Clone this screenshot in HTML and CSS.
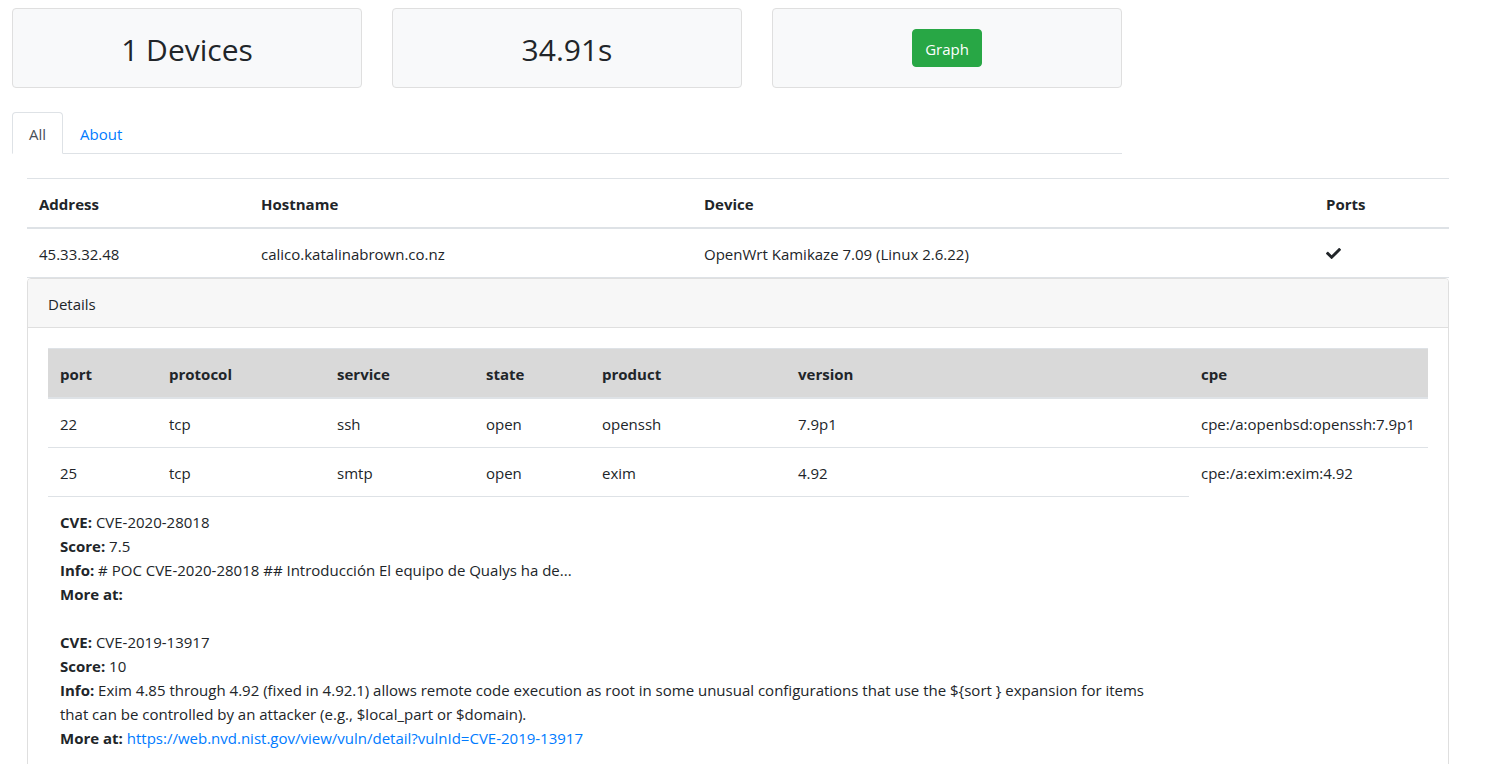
FILE: index.html
```html
<!DOCTYPE html>
<html lang="en">
<head>
<meta charset="utf-8">
<title>Scan results</title>
<link rel="stylesheet" href="styles.css">
</head>
<body>
<div class="page">
  <div class="stats">
    <div class="stat-card"><h2 class="stat-value">1 Devices</h2></div>
    <div class="stat-card"><h2 class="stat-value">34.91s</h2></div>
    <div class="stat-card"><button class="btn-graph" type="button">Graph</button></div>
  </div>

  <ul class="tabs">
    <li><a class="tab active" href="#all">All</a></li>
    <li><a class="tab" href="#about">About</a></li>
  </ul>

  <div class="results">
    <table class="hosts">
      <colgroup>
        <col class="c-address">
        <col class="c-hostname">
        <col class="c-device">
        <col class="c-ports">
      </colgroup>
      <thead>
        <tr><th>Address</th><th>Hostname</th><th>Device</th><th>Ports</th></tr>
      </thead>
      <tbody>
        <tr>
          <td>45.33.32.48</td>
          <td>calico.katalinabrown.co.nz</td>
          <td>OpenWrt Kamikaze 7.09 (Linux 2.6.22)</td>
          <td><svg class="check" width="15" height="11" viewBox="0 72 512 368" aria-hidden="true"><path fill="#212529" d="M173.898 439.404l-166.4-166.4c-9.997-9.997-9.997-26.206 0-36.204l36.203-36.204c9.997-9.998 26.207-9.998 36.204 0L192 312.69 432.095 72.596c9.997-9.997 26.206-9.997 36.204 0l36.203 36.204c9.997 9.997 9.997 26.206 0 36.204l-294.4 294.401c-9.998 9.997-26.207 9.997-36.204-.001z"/></svg></td>
        </tr>
        <tr class="details-row">
          <td colspan="4">
            <div class="card">
              <div class="card-header">Details</div>
              <div class="card-body">
                <table class="ports">
                  <colgroup>
                    <col class="p-port">
                    <col class="p-protocol">
                    <col class="p-service">
                    <col class="p-state">
                    <col class="p-product">
                    <col class="p-version">
                    <col class="p-cpe">
                  </colgroup>
                  <thead>
                    <tr><th>port</th><th>protocol</th><th>service</th><th>state</th><th>product</th><th>version</th><th>cpe</th></tr>
                  </thead>
                  <tbody>
                    <tr><td>22</td><td>tcp</td><td>ssh</td><td>open</td><td>openssh</td><td>7.9p1</td><td>cpe:/a:openbsd:openssh:7.9p1</td></tr>
                    <tr><td>25</td><td>tcp</td><td>smtp</td><td>open</td><td>exim</td><td>4.92</td><td>cpe:/a:exim:exim:4.92</td></tr>
                    <tr class="cve-row">
                      <td colspan="6">
                        <div class="cve">
                          <div><b>CVE:</b> CVE-2020-28018</div>
                          <div><b>Score:</b> 7.5</div>
                          <div><b>Info:</b> # POC CVE-2020-28018 ## Introducción El equipo de Qualys ha de...</div>
                          <div><b>More at:</b></div>
                        </div>
                        <div class="cve">
                          <div><b>CVE:</b> CVE-2019-13917</div>
                          <div><b>Score:</b> 10</div>
                          <div><b>Info:</b> Exim 4.85 through 4.92 (fixed in 4.92.1) allows remote code execution as root in some unusual configurations that use the ${sort } expansion for items that can be controlled by an attacker (e.g., $local_part or $domain).</div>
                          <div><b>More at:</b> <a href="https://web.nvd.nist.gov/view/vuln/detail?vulnId=CVE-2019-13917">https://web.nvd.nist.gov/view/vuln/detail?vulnId=CVE-2019-13917</a></div>
                        </div>
                      </td>
                    </tr>
                  </tbody>
                </table>
              </div>
            </div>
          </td>
        </tr>
      </tbody>
    </table>
  </div>
</div>
</body>
</html>
```

FILE: styles.css
```css
* { box-sizing: border-box; }

html, body {
  margin: 0;
  padding: 0;
  background: #fff;
}

body {
  font-family: "Open Sans", "Noto Sans", "Liberation Sans", sans-serif;
  font-size: 15px;
  line-height: 24px;
  color: #212529;
}

a { color: #007bff; text-decoration: none; }

.page {
  padding: 8px 0 0 12px;
}

/* stat cards */
.stats {
  display: flex;
  gap: 30px;
}

.stat-card {
  width: 350px;
  height: 80px;
  background: #f8f9fa;
  border: 1px solid #dfdfdf;
  border-radius: 4px;
  padding: 20px;
  display: flex;
  align-items: center;
  justify-content: center;
}

.stat-value {
  margin: 0;
  padding-top: 3px;
  font-size: 30px;
  font-weight: 400;
  line-height: 38px;
  color: #212529;
}

.btn-graph {
  font-family: inherit;
  font-size: 15px;
  line-height: 24px;
  color: #fff;
  background: #28a745;
  border: 1px solid #28a745;
  border-radius: 4px;
  padding: 7px 12px 5px;
  width: 70px;
  height: 38px;
}

/* tabs */
.tabs {
  list-style: none;
  margin: 24px 0 0 0;
  padding: 0;
  width: 1110px;
  display: flex;
  border-bottom: 1px solid #dee2e6;
}

.tabs li { margin-bottom: -1px; }

.tab {
  display: block;
  padding: 9px 16px 7px;
  border: 1px solid transparent;
  border-radius: 4px 4px 0 0;
  color: #007bff;
}

.tab.active {
  color: #495057;
  background: #fff;
  border-color: #dee2e6 #dee2e6 #fff;
}

/* hosts table */
.results {
  margin: 24px 0 0 15px;
  width: 1422px;
}

table {
  border-collapse: collapse;
  table-layout: fixed;
  width: 100%;
}

th, td {
  text-align: left;
  vertical-align: top;
  padding: 13px 12px 11px;
  border-top: 1px solid #dee2e6;
}

th { font-weight: 700; }

thead th {
  border-bottom: 2px solid #dee2e6;
}

.c-address { width: 222px; }
.c-hostname { width: 443px; }
.c-device { width: 622px; }
.c-ports { width: 135px; }

.check {
  display: block;
  margin-top: 6px;
}

.details-row > td {
  padding: 0;
}

.card {
  border: 1px solid #dfdfdf;
  border-radius: 4px;
  background: #fff;
}

.card-header {
  padding: 13px 20px 11px;
  background: #f7f7f7;
  border-bottom: 1px solid #dfdfdf;
  border-radius: 3px 3px 0 0;
}

.card-body {
  padding: 20px;
}

/* ports table */
.ports thead th {
  background: #d9d9d9;
}

.p-port { width: 109px; }
.p-protocol { width: 168px; }
.p-service { width: 149px; }
.p-state { width: 116px; }
.p-product { width: 196px; }
.p-version { width: 403px; }
.p-cpe { width: 239px; }

.cve {
  max-width: 1105px;
}

.cve + .cve { margin-top: 24px; }
```
